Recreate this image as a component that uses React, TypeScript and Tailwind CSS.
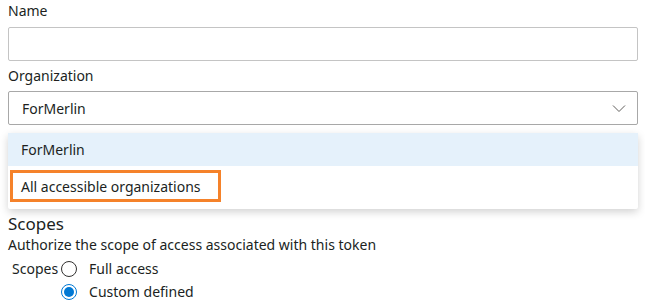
import React from "react";

export default function App() {
  return (
    <div className="relative w-[645px] h-[307px] overflow-hidden bg-white px-2 text-[14px] text-[#201f1e] font-['Noto_Sans',sans-serif]">
      {/* Name */}
      <div className="pt-px leading-[20px]">Name</div>
      <div className="mt-[6px] h-[34px] w-[630px] rounded-[2px] border border-[#c4c4c4] bg-white" />

      {/* Organization */}
      <div className="mt-[5px] leading-[20px]">Organization</div>
      <div className="relative mt-[5px] w-[630px]">
        <div className="flex h-[34px] items-center justify-between rounded-[2px] border border-[#a8a8a8] bg-white pl-[13px] pr-[10px]">
          <span>ForMerlin</span>
          <svg width="16" height="16" viewBox="0 0 16 16" fill="none" className="text-[#605e5c]">
            <path d="M2 5.5l6 6 6-6" stroke="currentColor" strokeWidth="1" />
          </svg>
        </div>

        {/* Dropdown list */}
        <div className="absolute left-0 top-[42px] z-10 w-[630px] rounded-[2px] bg-white pb-[7px] shadow-[0_3px_8px_rgba(0,0,0,0.18)]">
          <div className="flex h-[33px] items-center bg-[#e5f1fb] pl-[13px]">ForMerlin</div>
          <div className="pl-[2px] pt-[4px]">
            <div className="flex h-[32px] w-[211px] items-center border-[3px] border-[#f5822a] pl-[8px]">
              All accessible organizations
            </div>
          </div>
        </div>
      </div>

      {/* Scopes */}
      <div className="mt-[88px] text-[17px] leading-[22px]">Scopes</div>
      <div className="leading-[20px]">Authorize the scope of access associated with this token</div>
      <div className="mt-[4px] flex">
        <div className="pl-[4px] leading-[20px]">Scopes</div>
        <div className="flex flex-col gap-[3px] pl-[3px]">
          <label className="flex items-center gap-[12px] leading-[20px]">
            <span className="h-[16px] w-[16px] rounded-full border border-[#323130] bg-white" />
            <span>Full access</span>
          </label>
          <label className="flex items-center gap-[12px] leading-[20px]">
            <span className="flex h-[16px] w-[16px] items-center justify-center rounded-full border border-[#0078d4] bg-white">
              <span className="h-[10px] w-[10px] rounded-full bg-[#0078d4]" />
            </span>
            <span>Custom defined</span>
          </label>
        </div>
      </div>
    </div>
  );
}
